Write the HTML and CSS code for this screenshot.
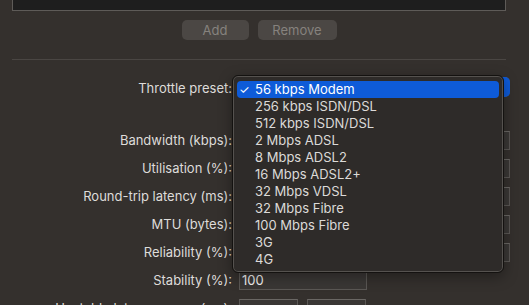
FILE: index.html
```html
<!DOCTYPE html>
<html lang="en">
<head>
  <meta charset="UTF-8">
  <title>Throttle settings</title>
  <link rel="stylesheet" href="styles.css">
</head>
<body>
  <div class="window">
    <div class="top">
      <div class="textview"></div>
      <div class="buttons">
        <button class="btn add" disabled>Add</button>
        <button class="btn remove" disabled>Remove</button>
      </div>
      <div class="sep"></div>
    </div>

    <div class="form">
      <div class="row">
        <label>Throttle preset:</label>
        <div class="popup"><span class="arrows"></span></div>
      </div>
      <div class="spacer"></div>
      <div class="row">
        <label>Bandwidth (kbps):</label>
        <input type="text" class="field wide" />
      </div>
      <div class="row">
        <label>Utilisation (%):</label>
        <input type="text" class="field wide" />
      </div>
      <div class="row">
        <label>Round-trip latency (ms):</label>
        <input type="text" class="field wide" />
      </div>
      <div class="row">
        <label>MTU (bytes):</label>
        <input type="text" class="field wide" />
      </div>
      <div class="row">
        <label>Reliability (%):</label>
        <input type="text" class="field wide" />
      </div>
      <div class="row">
        <label>Stability (%):</label>
        <input type="text" class="field mid" value="100" />
      </div>
      <div class="row">
        <label>Unstable latency range (ms):</label>
        <div class="pair">
          <input type="text" class="field small" />
          <input type="text" class="field small" />
        </div>
      </div>
    </div>

    <!-- popup menu open over the form -->
    <ul class="menu">
      <li class="selected"><span class="check">✓</span>56 kbps Modem</li>
      <li>256 kbps ISDN/DSL</li>
      <li>512 kbps ISDN/DSL</li>
      <li>2 Mbps ADSL</li>
      <li>8 Mbps ADSL2</li>
      <li>16 Mbps ADSL2+</li>
      <li>32 Mbps VDSL</li>
      <li>32 Mbps Fibre</li>
      <li>100 Mbps Fibre</li>
      <li>3G</li>
      <li>4G</li>
    </ul>
  </div>
</body>
</html>
```

FILE: styles.css
```css
html, body { margin: 0; height: 100%; overflow: hidden; }
body { background: #34302d; font-family: Inter, "Liberation Sans", sans-serif; font-size: 13px; color: #dedcda; }
.window { position: relative; height: 100%; }

.top { margin: 0 23px 0 12px; }
.textview { height: 10px; background: #1e1e1e; border: 1px solid #5e5b58; border-top: none; }
.buttons { display: flex; justify-content: center; gap: 9px; margin-top: 9px; }
.btn {
  height: 20px; padding: 0; border: none; border-radius: 5px;
  background: #4b4744; color: #86827e; font: inherit; font-size: 13px;
}
.add { width: 67px; }
.remove { width: 79px; }
.sep { height: 1px; background: #4a4643; margin-top: 19px; }

.form { margin-top: 14px; width: 510px; }
.row { display: grid; grid-template-columns: 232px 271px; column-gap: 7px; align-items: center; height: 28px; }
.row label { text-align: right; white-space: nowrap; }
.spacer { height: 24px; }

.popup { height: 20px; border-radius: 5px; background: #5a5653; position: relative; margin-top: -2px; }
.arrows { position: absolute; right: 0; top: 0; bottom: 0; width: 16px; background: #0e5bd8; border-radius: 0 5px 5px 0; }

.field {
  box-sizing: border-box; height: 19px; margin: 0; padding: 0 2px;
  background: #3a3735; border: 1px solid #5a5754; border-top-color: #6a6764;
  color: #f2f2f2; font: inherit; font-size: 13px; outline: none;
}
.wide { width: 271px; }
.mid { width: 128px; }
.small { width: 59px; }
.pair { display: flex; gap: 9px; }

.menu {
  position: absolute; left: 232px; top: 75px; width: 270px;
  margin: 0; padding: 5px 0 4px; list-style: none;
  background: #2e2b29; border: 1px solid #141210; border-radius: 6px;
  box-shadow: inset 0 0 0 1px #55524f, 0 4px 14px rgba(0,0,0,0.35);
}
.menu li { position: relative; height: 17px; line-height: 17px; margin: 0 4px; padding-left: 18px; border-radius: 4px; color: #dcdad8; }
.menu li.selected { background: #0e5bd8; color: #fff; }
.check { position: absolute; left: 2px; top: 0; font-size: 12px; }
```
